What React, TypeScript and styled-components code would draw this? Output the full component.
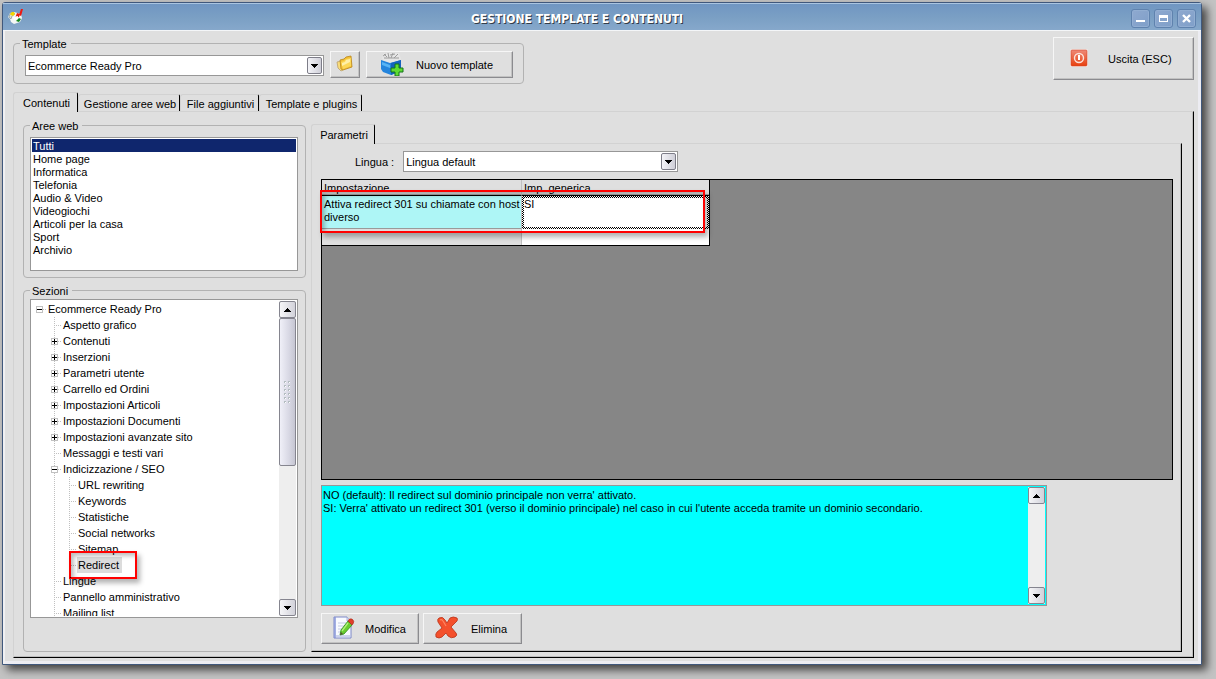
import React from "react";
import styled, { createGlobalStyle, css } from "styled-components";

const Global = createGlobalStyle`
  *, *::before, *::after { box-sizing: border-box; }
  body {
    margin: 0;
    background: #c3c3c3;
    color: #000;
    font: 11px/13px Tahoma, "Liberation Sans", sans-serif;
  }
  button, select, textarea, input { font: inherit; color: inherit; }
  ul { list-style: none; margin: 0; padding: 0; }
`;

const Desktop = styled.div`
  display: flex;
  min-height: 100vh;
  padding: 2px 14px 14px 2px;
`;

const Window = styled.section`
  flex: 1;
  min-width: 0;
  display: flex;
  flex-direction: column;
  background: #dfdfdf;
  border: 1px solid #40587c;
  border-radius: 3px 3px 0 0;
  box-shadow: 5px 5px 8px rgba(0, 0, 0, 0.65);
`;

const TitleBar = styled.header`
  display: grid;
  grid-template-columns: 16px 1fr 66px;
  align-items: center;
  height: 28px;
  padding: 0 5px;
  background: linear-gradient(#a9c4e0 0 1px, #7096c2 1px, #7a9fc4 14px, #86a8cb 27px);
  border-bottom: 1px solid #f4f6f8;
`;

const Title = styled.h1`
  margin: 0;
  padding-top: 4px;
  text-align: center;
  font-family: "DejaVu Sans Condensed", "Liberation Sans", sans-serif;
  font-size: 12px;
  line-height: 16px;
  font-weight: 700;
  color: #fff;
  text-shadow: 1px 1px 0 #333c48;
  white-space: nowrap;
`;

const WindowButtons = styled.div`
  display: flex;
  justify-content: flex-end;
  gap: 4px;
  padding: 3px 0 0;
`;

const WindowButton = styled.button`
  display: grid;
  place-items: center;
  width: 19px;
  height: 19px;
  padding: 0;
  border: 1px solid #5f82ae;
  border-radius: 3px;
  background: linear-gradient(135deg, #8fa9cf, #7f9fc9);
  box-shadow: inset 0 0 0 1px #92aed2;
`;

const Content = styled.main`
  flex: 1;
  display: flex;
  flex-direction: column;
  padding: 6px 7px 6px 10px;
  box-shadow: inset 2px 0 0 #f0f0f2, inset -3px -3px 0 #ececf2;
`;

const TopRow = styled.div`
  display: flex;
  justify-content: space-between;
  align-items: flex-start;
  height: 55px;
`;

const Group = styled.fieldset<{ $grow?: boolean }>`
  min-width: 0;
  margin: 0;
  padding: 5px 7px 6px 6px;
  border: 1px solid #b2b2b2;
  border-radius: 4px;
  ${(p) =>
    p.$grow &&
    css`
      flex: 1;
      padding-top: 2px;
    `}
`;

const Legend = styled.legend`
  padding: 1px 4px 0 2px;
  height: 13px;
`;

const TemplateGroup = styled(Group)`
  width: 511px;
  height: 47px;
  padding: 0 0 0 6px;
`;

const TemplateRow = styled.div`
  display: flex;
  align-items: center;
  gap: 6px;
  padding: 1px 0 0 5px;
  > span { margin-top: 2px; }
`;

const SelectBox = styled.span<{ $width: number }>`
  position: relative;
  flex: 0 0 ${(p) => p.$width}px;
  display: block;
`;

const NativeSelect = styled.select`
  appearance: none;
  display: block;
  width: 100%;
  height: 21px;
  padding: 2px 20px 0 2px;
  border: 1px solid #979797;
  border-radius: 0;
  background: #fff;
`;

const SelectArrow = styled.span`
  position: absolute;
  top: 2px;
  right: 2px;
  display: grid;
  place-items: center;
  width: 15px;
  height: 17px;
  border: 1px solid #7d7d88;
  border-radius: 2px;
  background: linear-gradient(90deg, #f4f4f8, #cfcfd8);
  pointer-events: none;
`;

const PushButton = styled.button<{ $width: number; $height: number }>`
  display: flex;
  align-items: center;
  width: ${(p) => p.$width}px;
  height: ${(p) => p.$height}px;
  padding: 2px 0 0;
  border: 1px solid;
  border-color: #f6f6f6 #8b8b8f #8b8b8f #f6f6f6;
  background: #dfdfdf;
  box-shadow: inset -1px -1px 0 #c2c2c2;
  white-space: nowrap;
`;

const ButtonIcon = styled.span<{ $width: number; $gap?: number }>`
  display: grid;
  place-items: center;
  flex: 0 0 ${(p) => p.$width}px;
  margin: 0 ${(p) => p.$gap ?? 0}px 4px 0;
`;

const Tabs = styled.div`
  display: flex;
  align-items: flex-end;
`;

const Tab = styled.button<{ $active?: boolean; $width: number }>`
  width: ${(p) => p.$width}px;
  height: ${(p) => (p.$active ? 20 : 17)}px;
  padding: 2px 0 0 2px;
  text-align: center;
  border: 1px solid;
  border-color: #d2d2d2 #000 transparent #d2d2d2;
  border-width: 1px 1px 0 1px;
  border-radius: 3px 2px 0 0;
  background: none;
  white-space: nowrap;
  ${(p) =>
    p.$active &&
    css`
      margin-bottom: -1px;
      background: #dfdfdf;
      z-index: 1;
    `}
`;

const TabPanel = styled.div`
  flex: 1;
  display: flex;
  border: 1px solid;
  border-color: #d2d2d2 #000 #000 #d2d2d2;
  box-shadow: inset -1px -1px 0 #bdbdbd;
`;

const MainPanel = styled(TabPanel)`
  gap: 5px;
  padding: 7px 11px 5px 9px;
`;

const Sidebar = styled.aside`
  flex: 0 0 283px;
  display: flex;
  flex-direction: column;
  gap: 6px;
`;

const ListBox = styled.ul`
  height: 134px;
  padding: 1px;
  border: 1px solid #979797;
  background: #fff;
`;

const ListItem = styled.li<{ $selected?: boolean }>`
  height: 13px;
  padding: 1px 0 0 1px;
  ${(p) =>
    p.$selected &&
    css`
      background: #0f266d;
      color: #fff;
    `}
`;

const TreeFrame = styled.div`
  display: flex;
  height: 319px;
  padding: 1px;
  border: 1px solid #979797;
  background: #fff;
`;

const TreeView = styled.ul`
  flex: 1;
  min-width: 0;
  overflow: hidden;
`;

const TreeRow = styled.li`
  display: flex;
  height: 16px;
  position: relative;
`;

const Guide = styled.span<{ $line?: "full" | "half"; $stub?: boolean }>`
  display: grid;
  place-items: center;
  flex: 0 0 15px;
  height: 16px;
  background-repeat: no-repeat;
  background-image: repeating-linear-gradient(#c0c0c0 0 1px, transparent 1px 2px),
    repeating-linear-gradient(90deg, #c0c0c0 0 1px, transparent 1px 2px);
  background-position: 7px 0, 7px 8px;
  background-size: 1px ${(p) => (p.$line === "full" ? "16px" : p.$line === "half" ? "8px" : "0")},
    ${(p) => (p.$stub ? "7px 1px" : "0 0")};
`;

const Expander = styled.button`
  display: block;
  width: 7px;
  height: 7px;
  margin-top: 1px;
  padding: 0;
  border: 0;
  background: #fff;
  line-height: 0;
`;

const TreeLabel = styled.span<{ $selected?: boolean }>`
  padding: 2px 3px 1px 1px;
  white-space: nowrap;
  background: ${(p) => (p.$selected ? "#dcdcdc" : "none")};
`;

const Highlight = styled.span`
  position: absolute;
  border: 2px solid #f00;
  box-shadow: 3px 4px 5px rgba(0, 0, 0, 0.3), inset 3px 3px 4px rgba(0, 0, 0, 0.25);
  pointer-events: none;
`;

const ItemHighlight = styled(Highlight)`
  left: 37px;
  top: -6px;
  width: 68px;
  height: 28px;
`;

const GridHighlight = styled(Highlight)`
  left: -2px;
  top: 10px;
  width: 385px;
  height: 43px;
`;

const ScrollTrack = styled.div`
  flex: 0 0 17px;
  display: flex;
  flex-direction: column;
  justify-content: space-between;
  background: #eee;
`;

const ScrollButton = styled.button`
  display: grid;
  place-items: center;
  height: 17px;
  padding: 0;
  border: 1px solid #85858f;
  border-radius: 2px;
  background: linear-gradient(90deg, #f6f6f8, #d2d2da);
`;

const ScrollThumb = styled.div`
  display: grid;
  place-items: center;
  height: 148px;
  margin-bottom: auto;
  border: 1px solid #85858f;
  border-radius: 2px;
  background: linear-gradient(90deg, #f0f0f8, #d8d8e4 60%, #c6c6d2);
`;

const Detail = styled.div`
  flex: 1;
  min-width: 0;
  display: flex;
  flex-direction: column;
  padding-top: 5px;
`;

const DetailPanel = styled(TabPanel)`
  flex-direction: column;
  padding: 7px 8px 7px 9px;
`;

const LanguageRow = styled.div`
  display: flex;
  align-items: center;
  gap: 9px;
  padding-left: 34px;
  label {
    flex: 0 0 38px;
    padding-top: 2px;
    white-space: nowrap;
  }
`;

const GridArea = styled.div`
  position: relative;
  flex: 1 0 300px;
  margin: 7px 0 5px;
  border: 1px solid #000;
  background: #868686;
`;

const SettingsTable = styled.table`
  table-layout: fixed;
  width: 388px;
  border-spacing: 0;
  border-right: 1px solid #000;
  border-bottom: 1px solid #000;
  th {
    height: 16px;
    padding: 1px 2px 0;
    text-align: left;
    font-weight: 400;
    background: #dfdfdf;
    border-bottom: 1px solid #000;
    box-shadow: inset 0 -1px 0 #a8a8a8;
  }
  td {
    height: 33px;
    padding: 2px 0 0 2px;
    vertical-align: top;
    background: #fff;
  }
  th:first-child, td:first-child { border-right: 1px solid #c0c0c0; white-space: nowrap; }
  td:first-child { background: #aef6f6; border-bottom: 1px solid #9a9a9a; }
  td.focus {
    padding: 0;
    border: 2px solid transparent;
    background: linear-gradient(#fff, #fff) padding-box,
      repeating-conic-gradient(#000 0 25%, #fff 0 50%) 0 0 / 2px 2px border-box;
  }
  tr.empty td { height: 16px; padding: 0; border-bottom: 0; }
  tr.empty td:first-child { background: #dfdfdf; }
`;

const DescriptionFrame = styled.div`
  display: flex;
  width: calc(100% - 126px);
  height: 121px;
  padding: 1px;
  border: 1px solid #979797;
  background: #0ff;
`;

const Description = styled.textarea`
  flex: 1;
  min-width: 0;
  padding: 2px 0;
  border: 0;
  outline: 0;
  resize: none;
  overflow: hidden;
  background: #0ff;
`;

const Actions = styled.div`
  display: flex;
  gap: 4px;
  margin-top: 7px;
`;

const Arrow = ({ up }: { up?: boolean }) => (
  <svg width="7" height="4" viewBox="0 0 7 4" shapeRendering="crispEdges" aria-hidden="true">
    <path d={up ? "M3 0h1v1h1v1h1v1h1v1H0V3h1V2h1V1h1z" : "M0 0h7v1H6v1H5v1H4v1H3V3H2V2H1V1H0z"} />
  </svg>
);

const PaletteIcon = () => (
  <svg width="16" height="15" viewBox="0 0 16 15" aria-hidden="true">
    <path d="M0 8l2-4 4-1 7 2 1 4-2 4-6 2-3-2-1-3z" fill="#f5f7f4" />
    <path d="M1 8l1-3 3-2 2 2-3 2-1 3z" fill="#dfe2c8" stroke="#76858c" strokeWidth="0.6" />
    <path d="M2 5l2-2h2l1 2-2 2-2-1z" fill="#f3d800" />
    <path d="M9 4l3 1-1 3-4 1z" fill="#e81c10" />
    <path d="M8 12l3-3 2 1-2 3z" fill="#13871f" />
    <path d="M15 0l-2 7-2-1 2-6z" fill="#f01810" />
    <path d="M5 8l5-1v3l-4 1z" fill="#fff" />
  </svg>
);

const FolderIcon = () => (
  <svg width="18" height="17" viewBox="0 0 18 17" aria-hidden="true">
    <path d="M1 7l4-1 2 9-2 1-3-3z" fill="#f9dc78" stroke="#b9a070" strokeWidth="0.8" />
    <path d="M4 5l4-1 2-2 5-1 1 11-9 3-2-1z" fill="#f2bf35" stroke="#b98519" strokeWidth="0.8" />
    <path d="M5 7l3-1 2-2 5-1v8l-8 3z" fill="#fcd858" />
    <path d="M6 8l3-1 1-2 4-1v3l-8 4z" fill="#fff0a8" />
  </svg>
);

const NewTemplateIcon = () => (
  <svg width="26" height="24" viewBox="0 0 26 24" aria-hidden="true">
    <path d="M3 6l2-5h15l2 6-3 5H6z" fill="#e6e6e6" />
    <path d="M5 2l3 3M9 1l1 5M14 1l-2 5M19 2l-4 4M5 6h15M4 4l3-2M11 3l5-1" stroke="#9c9c9c" strokeWidth="1" />
    <path d="M2 8l9 3 11-3v11l-10 4-8-3-2-3z" fill="#2484dc" />
    <path d="M12 11l10-3v11l-10 4z" fill="#1562bd" />
    <path d="M3 10l8 3v3l-8-3z" fill="#58b4f5" />
    <path d="M16 12h4v4h4v4h-4v4h-4v-4h-4v-4h4z" fill="#5edb32" stroke="#14721a" />
  </svg>
);

const PowerIcon = () => (
  <svg width="18" height="18" viewBox="0 0 18 18" aria-hidden="true">
    <defs>
      <linearGradient id="power" x1="0" y1="0" x2="0" y2="1">
        <stop offset="0" stopColor="#ee8a78" />
        <stop offset="1" stopColor="#e8400e" />
      </linearGradient>
    </defs>
    <rect width="18" height="18" rx="2" fill="#f6f2f0" />
    <rect x="1" y="1" width="16" height="16" rx="1" fill="url(#power)" stroke="#d3442a" strokeWidth="0.6" />
    <circle cx="9" cy="9" r="4.5" fill="none" stroke="#fbe3dc" strokeWidth="1.4" />
    <path d="M9 6v5" stroke="#fff" strokeWidth="2" />
  </svg>
);

const EditIcon = () => (
  <svg width="22" height="23" viewBox="0 0 22 23" aria-hidden="true">
    <path d="M1 1h13l4 4v17H1z" fill="#f8faff" stroke="#7c88c8" />
    <path d="M2 1v21" stroke="#8796d8" strokeWidth="1.5" />
    <path d="M14 1v4h4" fill="#dce2f4" stroke="#8c98cc" strokeWidth="0.7" />
    <path d="M5 7h8M5 10h7M5 13h5M5 16h3" stroke="#c2c9e2" />
    <path d="M3 19h14v2H3z" fill="#ccd3ec" />
    <path d="M15 5l4 4-8 9-4 1 1-5z" fill="#69cd30" stroke="#2d8c1c" strokeWidth="0.8" />
    <path d="M15 7l-6 8" stroke="#b3f07c" strokeWidth="1.3" />
    <path d="M7 19l1-3 2 2z" fill="#553" />
    <path d="M15 5q1-3 4-2 3 2 1 5l-1 1z" fill="#e0402c" stroke="#a8291c" strokeWidth="0.6" />
  </svg>
);

const DeleteIcon = () => (
  <svg width="23" height="23" viewBox="0 0 23 23" aria-hidden="true">
    <path
      d="M4 2q4-2 6 2l2 3 3-5q3-2 7 0 1 1 0 3l-6 6 5 6q2 2-1 4-4 2-7-1l-2-3-4 4q-3 2-6 0-1-3 1-5l5-4-4-6q-1-3 1-4z"
      fill="#f4502c"
      stroke="#b83218"
      strokeWidth="0.8"
    />
    <path d="M5 4q2-1 3 1l3 5" fill="none" stroke="#ff8560" strokeWidth="1.2" />
  </svg>
);

const Grip = () => (
  <svg width="7" height="23" viewBox="0 0 7 23" shapeRendering="crispEdges" aria-hidden="true">
    {[0, 4, 8, 12, 16, 20].map((y) => (
      <React.Fragment key={y}>
        <path d={`M1 ${y + 1}h1v1H1zM5 ${y + 1}h1v1H5z`} fill="#fff" />
        <path d={`M0 ${y}h2v1H1v1H0zM4 ${y}h2v1H5v1H4z`} fill="#b3bcc0" />
      </React.Fragment>
    ))}
  </svg>
);

type Combo = { id: string; width: number; label: string; value: string };
const Select = ({ id, width, label, value }: Combo) => (
  <SelectBox $width={width}>
    <NativeSelect id={id} aria-label={label} defaultValue={value}>
      <option>{value}</option>
    </NativeSelect>
    <SelectArrow>
      <Arrow />
    </SelectArrow>
  </SelectBox>
);

const areas = [
  "Tutti",
  "Home page",
  "Informatica",
  "Telefonia",
  "Audio & Video",
  "Videogiochi",
  "Articoli per la casa",
  "Sport",
  "Archivio",
];

type Node = { text: string; level: 0 | 1 | 2; sign?: "+" | "-"; last?: boolean; selected?: boolean };
const sections: Node[] = [
  { text: "Ecommerce Ready Pro", level: 0, sign: "-" },
  { text: "Aspetto grafico", level: 1 },
  { text: "Contenuti", level: 1, sign: "+" },
  { text: "Inserzioni", level: 1, sign: "+" },
  { text: "Parametri utente", level: 1, sign: "+" },
  { text: "Carrello ed Ordini", level: 1, sign: "+" },
  { text: "Impostazioni Articoli", level: 1, sign: "+" },
  { text: "Impostazioni Documenti", level: 1, sign: "+" },
  { text: "Impostazioni avanzate sito", level: 1, sign: "+" },
  { text: "Messaggi e testi vari", level: 1 },
  { text: "Indicizzazione / SEO", level: 1, sign: "-" },
  { text: "URL rewriting", level: 2 },
  { text: "Keywords", level: 2 },
  { text: "Statistiche", level: 2 },
  { text: "Social networks", level: 2 },
  { text: "Sitemap", level: 2 },
  { text: "Redirect", level: 2, last: true, selected: true },
  { text: "Lingue", level: 1 },
  { text: "Pannello amministrativo", level: 1 },
  { text: "Mailing list", level: 1 },
];

const TreeItem = ({ node }: { node: Node }) => (
  <TreeRow role="treeitem" aria-level={node.level + 1} aria-selected={!!node.selected}>
    {node.level > 0 && <Guide />}
    {node.level > 1 && <Guide $line="full" />}
    <Guide $line={node.level === 0 ? undefined : node.last ? "half" : "full"} $stub>
      {node.sign && (
        <Expander aria-label={node.sign === "+" ? `Espandi ${node.text}` : `Comprimi ${node.text}`}>
          <svg width="7" height="7" viewBox="0 0 7 7" shapeRendering="crispEdges">
            <path d="M0 0h7v7H0zM1 1v5h5V1z" fillRule="evenodd" fill="#c0c0c0" />
            <path d={node.sign === "+" ? "M1 3h5v1H1zM3 1h1v5H3z" : "M1 3h5v1H1z"} />
          </svg>
        </Expander>
      )}
    </Guide>
    <TreeLabel $selected={node.selected}>{node.text}</TreeLabel>
    {node.selected && <ItemHighlight />}
  </TreeRow>
);

export default function App() {
  return (
    <>
      <Global />
      <Desktop>
        <Window>
          <TitleBar>
            <PaletteIcon />
            <Title>GESTIONE TEMPLATE E CONTENUTI</Title>
            <WindowButtons>
              <WindowButton aria-label="Riduci a icona">
                <svg width="9" height="9" shapeRendering="crispEdges">
                  <path d="M0 6h9v2H0z" fill="#fff" />
                </svg>
              </WindowButton>
              <WindowButton aria-label="Ingrandisci">
                <svg width="9" height="9" shapeRendering="crispEdges">
                  <path d="M0 1h9v7H0zM1 4v3h7V4z" fillRule="evenodd" fill="#fff" />
                </svg>
              </WindowButton>
              <WindowButton aria-label="Chiudi">
                <svg width="9" height="9">
                  <path d="M1 1l7 7M8 1L1 8" stroke="#fff" strokeWidth="2.4" />
                </svg>
              </WindowButton>
            </WindowButtons>
          </TitleBar>

          <Content>
            <TopRow>
              <TemplateGroup>
                <Legend>Template</Legend>
                <TemplateRow>
                  <Select id="template" width={299} label="Template" value="Ecommerce Ready Pro" />
                  <PushButton $width={30} $height={27} aria-label="Apri cartella">
                    <ButtonIcon $width={28}>
                      <FolderIcon />
                    </ButtonIcon>
                  </PushButton>
                  <PushButton $width={147} $height={27}>
                    <ButtonIcon $width={49}>
                      <NewTemplateIcon />
                    </ButtonIcon>
                    Nuovo template
                  </PushButton>
                </TemplateRow>
              </TemplateGroup>
              <PushButton $width={141} $height={43}>
                <ButtonIcon $width={50} $gap={4}>
                  <PowerIcon />
                </ButtonIcon>
                Uscita (ESC)
              </PushButton>
            </TopRow>

            <Tabs role="tablist">
              <Tab role="tab" aria-selected $active $width={65}>
                Contenuti
              </Tab>
              <Tab role="tab" $width={102}>
                Gestione aree web
              </Tab>
              <Tab role="tab" $width={79}>
                File aggiuntivi
              </Tab>
              <Tab role="tab" $width={103}>
                Template e plugins
              </Tab>
            </Tabs>

            <MainPanel role="tabpanel">
              <Sidebar>
                <Group>
                  <Legend>Aree web</Legend>
                  <ListBox role="listbox" aria-label="Aree web">
                    {areas.map((a, i) => (
                      <ListItem key={a} role="option" aria-selected={i === 0} $selected={i === 0}>
                        {a}
                      </ListItem>
                    ))}
                  </ListBox>
                </Group>
                <Group $grow>
                  <Legend>Sezioni</Legend>
                  <TreeFrame>
                    <TreeView role="tree" aria-label="Sezioni">
                      {sections.map((n) => (
                        <TreeItem key={n.text} node={n} />
                      ))}
                    </TreeView>
                    <ScrollTrack>
                      <ScrollButton aria-label="Scorri su">
                        <Arrow up />
                      </ScrollButton>
                      <ScrollThumb>
                        <Grip />
                      </ScrollThumb>
                      <ScrollButton aria-label="Scorri giù">
                        <Arrow />
                      </ScrollButton>
                    </ScrollTrack>
                  </TreeFrame>
                </Group>
              </Sidebar>

              <Detail>
                <Tabs role="tablist">
                  <Tab role="tab" aria-selected $active $width={64}>
                    Parametri
                  </Tab>
                </Tabs>
                <DetailPanel role="tabpanel">
                  <LanguageRow>
                    <label htmlFor="lingua">Lingua :</label>
                    <Select id="lingua" width={275} label="Lingua" value="Lingua default" />
                  </LanguageRow>
                  <GridArea>
                    <SettingsTable>
                      <colgroup>
                        <col style={{ width: 200 }} />
                        <col />
                      </colgroup>
                      <thead>
                        <tr>
                          <th>Impostazione</th>
                          <th>Imp. generica</th>
                        </tr>
                      </thead>
                      <tbody>
                        <tr>
                          <td>
                            Attiva redirect 301 su chiamate con host
                            <br />
                            diverso
                          </td>
                          <td className="focus">SI</td>
                        </tr>
                        <tr className="empty">
                          <td />
                          <td />
                        </tr>
                      </tbody>
                    </SettingsTable>
                    <GridHighlight />
                  </GridArea>
                  <DescriptionFrame>
                    <Description
                      readOnly
                      aria-label="Descrizione"
                      value={
                        "NO (default): Il redirect sul dominio principale non verra' attivato.\nSI: Verra' attivato un redirect 301 (verso il dominio principale) nel caso in cui l'utente acceda tramite un dominio secondario."
                      }
                    />
                    <ScrollTrack>
                      <ScrollButton aria-label="Scorri su">
                        <Arrow up />
                      </ScrollButton>
                      <ScrollButton aria-label="Scorri giù">
                        <Arrow />
                      </ScrollButton>
                    </ScrollTrack>
                  </DescriptionFrame>
                  <Actions>
                    <PushButton $width={98} $height={31}>
                      <ButtonIcon $width={43}>
                        <EditIcon />
                      </ButtonIcon>
                      Modifica
                    </PushButton>
                    <PushButton $width={99} $height={31}>
                      <ButtonIcon $width={44} $gap={3}>
                        <DeleteIcon />
                      </ButtonIcon>
                      Elimina
                    </PushButton>
                  </Actions>
                </DetailPanel>
              </Detail>
            </MainPanel>
          </Content>
        </Window>
      </Desktop>
    </>
  );
}
